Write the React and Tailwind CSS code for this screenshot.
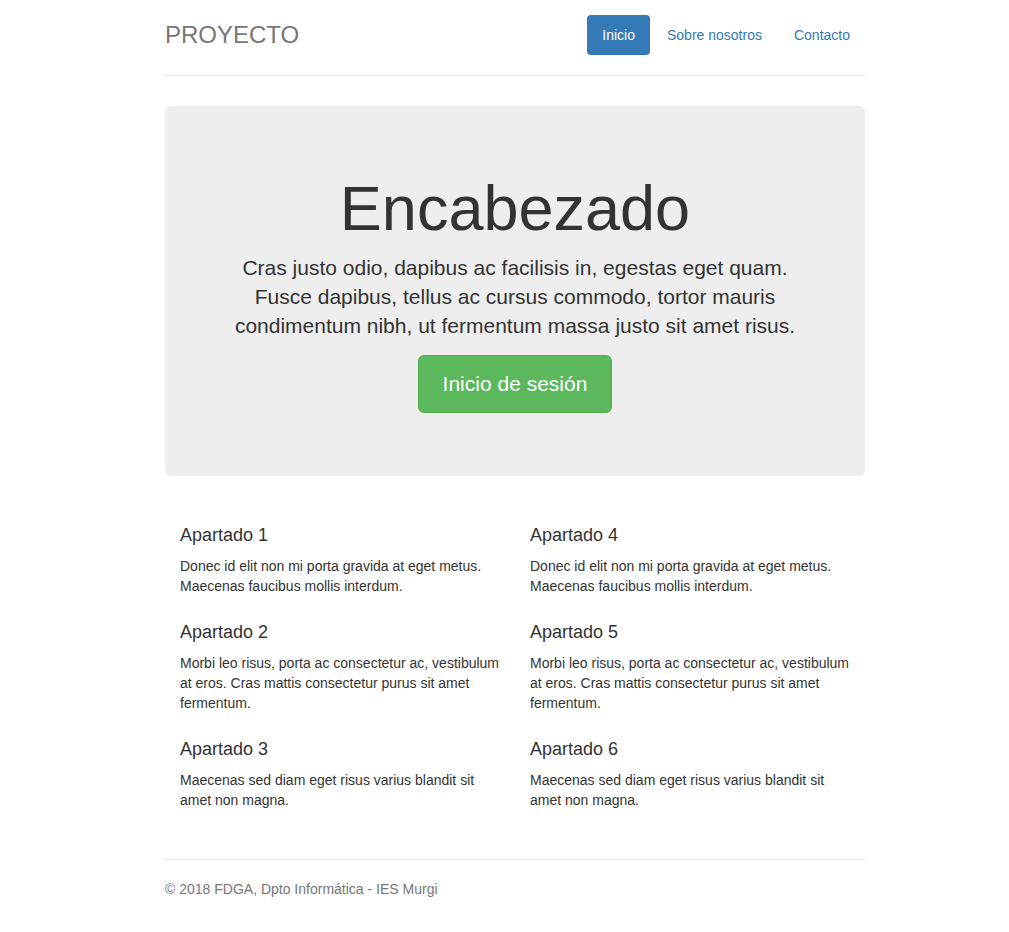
import React from 'react';

const sections = [
  [
    { title: 'Apartado 1', text: 'Donec id elit non mi porta gravida at eget metus. Maecenas faucibus mollis interdum.' },
    { title: 'Apartado 2', text: 'Morbi leo risus, porta ac consectetur ac, vestibulum at eros. Cras mattis consectetur purus sit amet fermentum.' },
    { title: 'Apartado 3', text: 'Maecenas sed diam eget risus varius blandit sit amet non magna.' },
  ],
  [
    { title: 'Apartado 4', text: 'Donec id elit non mi porta gravida at eget metus. Maecenas faucibus mollis interdum.' },
    { title: 'Apartado 5', text: 'Morbi leo risus, porta ac consectetur ac, vestibulum at eros. Cras mattis consectetur purus sit amet fermentum.' },
    { title: 'Apartado 6', text: 'Maecenas sed diam eget risus varius blandit sit amet non magna.' },
  ],
];

const App = () => {
  return (
    <div className="min-h-screen bg-white pl-[21px] pt-[15px] pb-[20px] font-['Liberation_Sans',Arial,sans-serif] text-[14px] leading-[20px] text-[#333]">
      <div className="mx-auto w-[700px]">
        {/* Header */}
        <header className="flex items-center justify-between border-b border-[#e5e5e5] pb-[20px]">
          <h3 className="text-[24px] leading-[40px] text-[#777]">PROYECTO</h3>
          <nav className="flex gap-[2px]">
            <a className="block rounded-[4px] bg-[#337ab7] px-[15px] py-[10px] text-white">Inicio</a>
            <a className="block rounded-[4px] px-[15px] py-[10px] text-[#337ab7]">Sobre nosotros</a>
            <a className="block rounded-[4px] px-[15px] py-[10px] text-[#337ab7]">Contacto</a>
          </nav>
        </header>

        {/* Jumbotron */}
        <div className="mt-[30px] rounded-[6px] bg-[#eee] px-[60px] pt-[48px] pb-[48px] text-center">
          <h1 className="mt-[20px] mb-[10px] text-[63px] leading-[1.1] text-[#333]">Encabezado</h1>
          <p className="mb-[15px] text-[21px] leading-[29px]">
            Cras justo odio, dapibus ac facilisis in, egestas eget quam. Fusce dapibus, tellus ac cursus commodo, tortor mauris condimentum nibh, ut fermentum massa justo sit amet risus.
          </p>
          <div className="mb-[15px]">
            <a className="inline-block rounded-[6px] border border-[#4cae4c] bg-[#5cb85c] px-[24px] py-[13px] text-[21px] leading-[30px] text-white">
              Inicio de sesión
            </a>
          </div>
        </div>

        {/* Marketing */}
        <div className="mt-[40px] mb-[39px] grid grid-cols-2">
          {sections.map((col, i) => (
            <div key={i} className="px-[15px]">
              {col.map((s, j) => (
                <div key={s.title}>
                  <h4 className={`${j === 0 ? 'mt-[10px]' : 'mt-[27px]'} mb-[10px] text-[18px] leading-[19.8px]`}>{s.title}</h4>
                  <p className="mb-[10px]">{s.text}</p>
                </div>
              ))}
            </div>
          ))}
        </div>

        {/* Footer */}
        <footer className="border-t border-[#e5e5e5] pt-[19px] text-[#777]">
          <p>© 2018 FDGA, Dpto Informática - IES Murgi</p>
        </footer>
      </div>
    </div>
  );
};

export default App;
